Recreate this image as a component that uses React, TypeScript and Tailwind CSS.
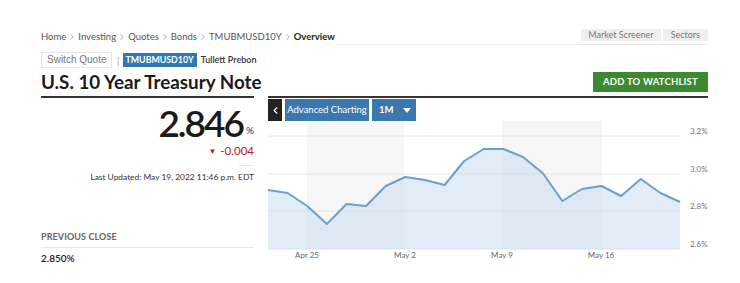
import { ChevronRight, ChevronLeft } from 'lucide-react'

const crumbs = ['Home', 'Investing', 'Quotes', 'Bonds', 'TMUBMUSD10Y']

const ys = [191, 194, 207, 225, 205, 207, 187, 178, 181, 186, 162, 150, 150, 158, 174, 202, 190, 187, 197, 180, 194, 203]

function Chart() {
  const top = 122
  const step = 412 / 21
  const pts = ys.map((y, i) => [i * step, y - top] as const)
  const line = pts.map(([x, y], i) => `${i ? 'L' : 'M'}${x.toFixed(1)},${y}`).join(' ')
  const area = `${line} L412,128 L0,128 Z`
  const grid = [
    { y: 15, label: '3.2%' },
    { y: 53, label: '3.0%' },
    { y: 90, label: '2.8%' },
    { y: 128, label: '2.6%' },
  ]
  const ticks = [
    { x: 39, label: 'Apr 25' },
    { x: 137, label: 'May 2' },
    { x: 234, label: 'May 9' },
    { x: 333, label: 'May 16' },
  ]
  return (
    <svg width="440" height="145" className="block">
      <rect x="39" y="0" width="97" height="128" fill="#f6f6f6" />
      <rect x="234" y="0" width="100" height="128" fill="#f6f6f6" />
      {grid.map((g) => (
        <g key={g.label}>
          <line x1="0" x2="412" y1={g.y} y2={g.y} stroke="#e6e6e6" strokeWidth="1" />
          <text x="422" y={g.y - 2} fontSize="8" fill="#777" fontFamily="Lato, sans-serif">
            {g.label}
          </text>
        </g>
      ))}
      <path d={area} fill="#c9dcee" fillOpacity="0.55" />
      <path d={line} fill="none" stroke="#6b9fd1" strokeWidth="2" strokeLinejoin="round" />
      {ticks.map((t) => (
        <text key={t.label} x={t.x} y="137" fontSize="8" fill="#666" textAnchor="middle" fontFamily="Lato, sans-serif">
          {t.label}
        </text>
      ))}
    </svg>
  )
}

export default function App() {
  return (
    <div className="w-[740px] h-[283px] bg-white pl-[41px] pr-[32px] pt-[29px] font-['Lato',sans-serif] text-[#222] overflow-hidden">
      <div className="flex items-start">
        <div className="flex items-center h-[16px] text-[9.5px] text-[#555] whitespace-nowrap">
          {crumbs.map((c) => (
            <span key={c} className="flex items-center">
              {c}
              <ChevronRight size={10} strokeWidth={1.5} className="mx-[1px] text-[#777]" />
            </span>
          ))}
          <span className="font-bold text-[#222]">Overview</span>
        </div>
        <div className="flex-1 h-[16px] border-b border-[#ececec]" />
        <div className="flex gap-[2px] border-b border-[#ececec] h-[16px]">
          <span className="bg-[#efefef] text-[#777] text-[9px] px-[7px] h-[12px] leading-[12px]">Market Screener</span>
          <span className="bg-[#efefef] text-[#777] text-[9px] px-[8px] h-[12px] leading-[12px]">Sectors</span>
        </div>
      </div>

      <div className="flex items-center mt-[7px] h-[16px]">
        <div className="w-[71px] h-[16px] border border-[#e6e6e6] text-[10px] text-[#777] pl-[5px] leading-[14px] font-['Liberation_Sans',sans-serif]">
          Switch Quote
        </div>
        <span className="ml-[5px] text-[10px] text-[#aaa]">|</span>
        <span className="ml-[3px] bg-[#2f78b4] text-white text-[8.8px] font-bold px-[3px] h-[14px] leading-[14px]">TMUBMUSD10Y</span>
        <span className="ml-[4px] text-[9px] text-[#333] font-semibold">Tullett Prebon</span>
      </div>

      <div className="flex items-center justify-between mt-[4px] h-[20px]">
        <h1 className="text-[18.8px] font-bold text-[#1a1a1a] leading-none">U.S. 10 Year Treasury Note</h1>
        <button className="w-[115px] h-[20px] bg-[#3b8a2f] text-white text-[9.5px] font-bold tracking-[0.2px]">
          ADD TO WATCHLIST
        </button>
      </div>

      <div className="flex mt-[4px]">
        <div className="w-[213px] shrink-0 border-t-2 border-[#333] pt-[5px]">
          <div className="flex flex-col items-end">
            <div className="flex items-end">
              <span className="text-[37px] font-semibold leading-[40px] tracking-[-2px] text-[#1a1a1a]">2.846</span>
              <span className="text-[10px] mb-[5px] ml-[3px] text-[#333]">%</span>
            </div>
            <div className="flex items-center text-[11.5px] text-[#b3212b] leading-[14px] mt-[1px]">
              <span className="text-[8px] mr-[4px]">▼</span>-0.004
            </div>
            <div className="w-[15px] border-t border-[#e5e5e5] mt-[7px]" />
            <div className="text-[8.4px] text-[#333] mt-[5px] leading-[12px]">
              Last Updated: May 19, 2022 11:46 p.m. EDT
            </div>
          </div>
          <div className="mt-[47px] text-[9px] font-bold text-[#666] pb-[3px] border-b border-[#e8e8e8] tracking-[0.1px]">
            PREVIOUS CLOSE
          </div>
          <div className="text-[10px] font-semibold text-[#222] mt-[3px]">2.850%</div>
        </div>

        <div className="ml-[14px] w-[440px] shrink-0 border-t-2 border-[#333]">
          <div className="flex gap-[3px] mt-[1px] h-[22px]">
            <button className="w-[14px] h-[22px] bg-[#222] text-white flex items-center justify-center">
              <ChevronLeft size={11} strokeWidth={2.5} />
            </button>
            <button className="w-[84px] h-[22px] bg-[#3b78ad] text-white text-[9.5px]">Advanced Charting</button>
            <button className="w-[44px] h-[22px] bg-[#3b78ad] text-white text-[9.5px] font-bold flex items-center pl-[7px] gap-[9px]">
              1M
              <svg width="8" height="5" viewBox="0 0 8 5">
                <path d="M0 0 H8 L4 5 Z" fill="white" />
              </svg>
            </button>
          </div>
          <Chart />
        </div>
      </div>
    </div>
  )
}
